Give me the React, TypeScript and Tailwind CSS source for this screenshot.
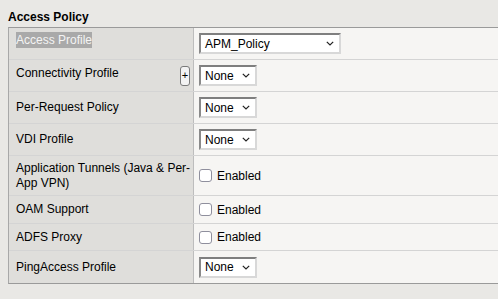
import React from "react";

const font = { fontFamily: '"Liberation Sans", Arial, sans-serif' };

function Chevron() {
  return (
    <svg width="8" height="5" viewBox="0 0 8 5" className="shrink-0">
      <path d="M0.8 0.8 L4 4 L7.2 0.8" fill="none" stroke="#222" strokeWidth="1.2" />
    </svg>
  );
}

function Select({ value, width }: { value: string; width: string }) {
  return (
    <div
      className={`flex h-[21px] ${width} items-center justify-between border-2 border-t-[#7f7f7f] border-l-[#8a8a8a] border-b-[#d8d8d8] border-r-[#d8d8d8] bg-white pl-[4px] pr-[5px] text-[12px] leading-[14px] text-black`}
    >
      <span>{value}</span>
      <Chevron />
    </div>
  );
}

function Check() {
  return (
    <div className="flex items-center gap-[5px] text-[12px] leading-[14px] text-black">
      <div className="h-[13px] w-[13px] rounded-[3px] border border-[#8f8f9d] bg-white" />
      <span>Enabled</span>
    </div>
  );
}

type Row = {
  label: React.ReactNode;
  h: string;
  control: React.ReactNode;
  extra?: React.ReactNode;
  top?: boolean;
  labelPad?: string;
};

export default function App() {
  const rows: Row[] = [
    {
      label: (
        <span className="inline-block bg-[#a9a9a9] leading-[16px] text-[#f4f4f4]">Access Profile</span>
      ),
      h: "h-[32px]",
      control: <Select value="APM_Policy" width="w-[142px]" />,
      top: true,
    },
    {
      label: "Connectivity Profile",
      h: "h-[32px]",
      control: <Select value="None" width="w-[58px]" />,
      labelPad: "pb-[4px]",
      extra: (
        <div className="flex h-[20px] w-[10px] items-center justify-center rounded-[3px] border border-[#7a7a7a] bg-[#f3f3f3] text-[11px] leading-none text-black">
          +
        </div>
      ),
    },
    { label: "Per-Request Policy", h: "h-[32px]", control: <Select value="None" width="w-[58px]" /> },
    { label: "VDI Profile", h: "h-[32px]", control: <Select value="None" width="w-[58px]" /> },
    {
      label: (
        <>
          Application Tunnels (Java &amp; Per-
          <br />
          App VPN)
        </>
      ),
      h: "h-[40px]",
      control: <Check />,
    },
    { label: "OAM Support", h: "h-[28px]", control: <Check /> },
    { label: "ADFS Proxy", h: "h-[27px]", control: <Check /> },
    { label: "PingAccess Profile", h: "h-[32px]", control: <Select value="None" width="w-[58px]" /> },
  ];

  return (
    <div className="min-h-[299px] w-full overflow-hidden bg-[#e9e8e5] text-black" style={font}>
      <div className="h-[27px] pl-[8px] pt-[10px] text-[12px] font-bold leading-[14px]">Access Policy</div>
      <div className="ml-[8px] border-t border-b border-l border-t-[#9a9a9a] border-b-[#9a9a9a] border-l-[#a8a8a8]">
        {rows.map((r, i) => (
          <div
            key={i}
            className={`grid grid-cols-[185px_1fr] ${r.h} ${i < rows.length - 1 ? "border-b border-[#d4d4d4]" : ""}`}
          >
            <div
              className={`flex justify-between border-r border-[#bdbdbd] bg-[#dfdedb] pl-[7px] pr-[3px] text-[12px] leading-[15px] ${
                r.top ? "items-start pt-[4px]" : "items-center"
              }`}
            >
              <div className={`whitespace-nowrap ${r.labelPad ?? ""}`}>{r.label}</div>
              {r.extra}
            </div>
            <div className="flex items-center bg-[#f6f5f3] pl-[5px]">{r.control}</div>
          </div>
        ))}
      </div>
    </div>
  );
}
